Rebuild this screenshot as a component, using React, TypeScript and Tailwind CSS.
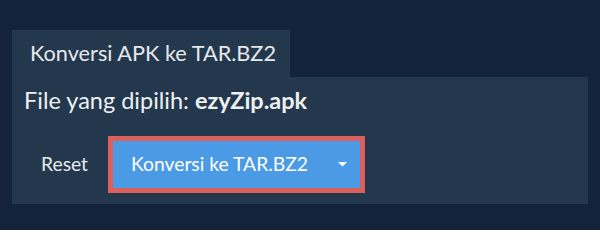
import React from "react";

export default function App() {
  return (
    <div className="w-[600px] h-[230px] bg-[#12233a] pt-[30px] px-[12px]" style={{ fontFamily: "Lato, 'Open Sans', sans-serif" }}>
      <div className="flex">
        <div className="bg-[#23374d] h-[47px] w-[278px] pl-[18px] flex items-center text-[21.7px] text-[#e6e9ec]">
          Konversi APK ke TAR.BZ2
        </div>
      </div>
      <div className="bg-[#23374d] h-[127px] px-[12px] pt-[7px]">
        <div className="text-[23.5px] leading-[32px] text-[#eef0f2]">
          File yang dipilih: <span className="font-bold">ezyZip.apk</span>
        </div>
        <div className="flex items-center mt-[20px]">
          <button className="w-[84px] h-[57px] text-[19.3px] text-[#e6e9ec] pl-[17px] text-left">Reset</button>
          <div className="border-[5px] border-[#db5f5a] bg-[#4a9ae6] h-[57px] w-[257px] flex items-center pl-[18px] pr-[13px] text-[19.3px] text-white">
            <span className="flex-1">Konversi ke TAR.BZ2</span>
            <svg width="9" height="5" viewBox="0 0 9 5"><path d="M0 0 L9 0 L4.5 4.5 Z" fill="#ffffff" /></svg>
          </div>
        </div>
      </div>
    </div>
  );
}
